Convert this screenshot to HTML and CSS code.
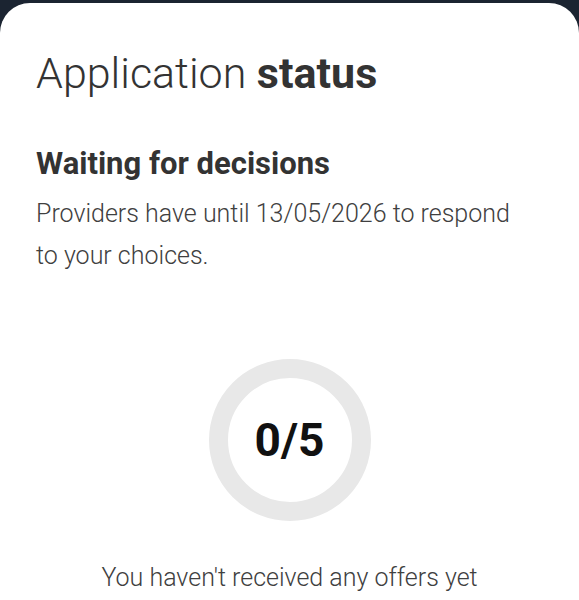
FILE: index.html
```html
<!DOCTYPE html>
<html>
<head>
<meta charset="utf-8">
<link rel="stylesheet" href="styles.css">
</head>
<body>
<div class="sheet">
  <h1 class="title">Application <strong>status</strong></h1>
  <h2 class="subtitle">Waiting for decisions</h2>
  <p class="desc">Providers have until 13/05/2026 to respond to your choices.</p>
  <div class="ring-wrap">
    <div class="ring"><span class="count">0/5</span></div>
  </div>
  <p class="note">You haven't received any offers yet</p>
</div>
</body>
</html>
```
FILE: styles.css
```css
html, body {
  margin: 0;
  padding: 0;
  height: 100%;
  background: #1b2431;
  overflow: hidden;
}
.sheet {
  margin-top: 3px;
  height: 597px;
  box-sizing: border-box;
  background: #ffffff;
  border-radius: 30px 30px 0 0;
  padding: 45px 36px 0 36px;
  font-family: Roboto, "Liberation Sans", sans-serif;
  color: #333333;
  overflow: hidden;
}
.title {
  margin: 0;
  font-size: 43px;
  line-height: 50px;
  font-weight: 300;
  color: #333333;
}
.title strong {
  font-weight: 700;
}
.subtitle {
  margin: 46px 0 0 0;
  font-size: 31px;
  line-height: 40px;
  font-weight: 700;
  color: #333333;
}
.desc {
  margin: 9px 0 0 0;
  font-size: 25px;
  line-height: 42px;
  font-weight: 300;
  color: #404040;
  max-width: 490px;
}
.ring-wrap {
  display: flex;
  justify-content: center;
  margin-top: 82px;
}
.ring {
  width: 124px;
  height: 124px;
  border: 19px solid #e8e8e8;
  border-radius: 50%;
  display: flex;
  align-items: center;
  justify-content: center;
}
.count {
  font-size: 46px;
  font-weight: 700;
  color: #111111;
}
.note {
  margin: 36px 0 0 0;
  text-align: center;
  font-size: 25px;
  line-height: 42px;
  font-weight: 300;
  color: #404040;
}
```
